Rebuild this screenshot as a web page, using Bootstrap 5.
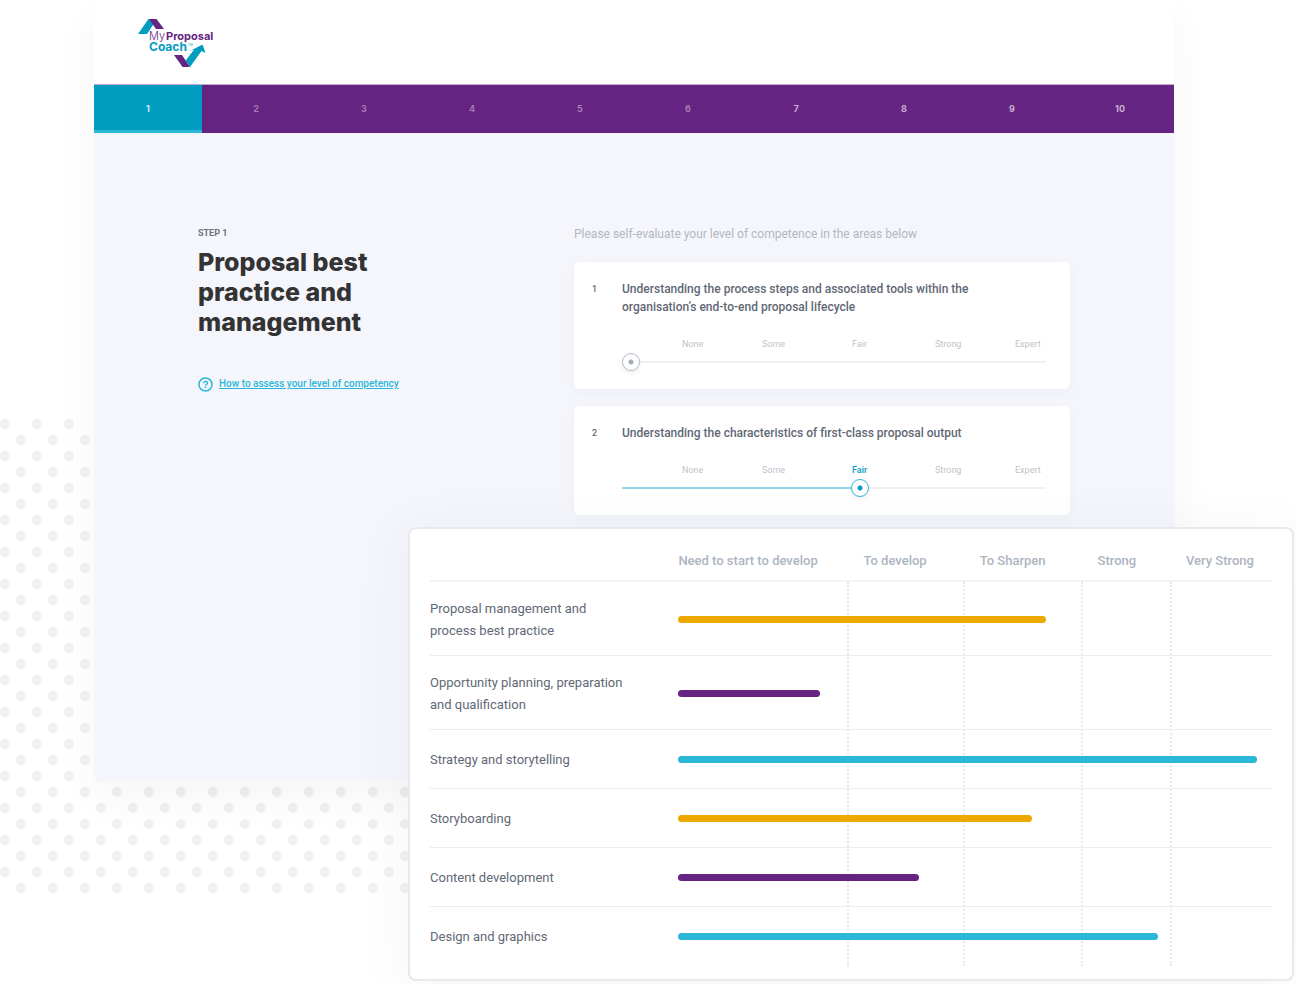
<!DOCTYPE html>
<html lang="en">
<head>
<meta charset="utf-8">
<meta name="viewport" content="width=device-width, initial-scale=1">
<title>MyProposalCoach</title>
<link href="https://cdn.jsdelivr.net/npm/bootstrap@5.3.0/dist/css/bootstrap.min.css" rel="stylesheet">
<style>
  :root { --teal: #009dc0; --sky: #2ab7d8; --violet: #662482; --amber: #eca900; --slate: #5f6875; --mist: #adb5c1; }
  body { font-family: Roboto, sans-serif; color: var(--slate); background: #fff; }
  .scene { position: relative; padding-bottom: 3px; overflow: hidden; }
  .dots {
    position: absolute; left: 0; right: 40%; top: 418px; bottom: 90px;
    background:
      radial-gradient(circle at 5px 6px, #eff0f2 4px, transparent 6px),
      radial-gradient(circle at 21px 22px, #eff0f2 4px, transparent 6px);
    background-size: 32px 32px;
  }
  .panel {
    position: relative; margin: 0 122px 0 94px; min-height: 781px; background: #f5f6fb;
    border-radius: 0 0 6px 6px; box-shadow: 0 18px 44px rgba(0, 0, 0, .04);
  }
  .brand-bar { height: 84px; padding: 18px 44px; background: #fff; }
  .steps { border-top: 1px solid #c5a9cf; background: var(--violet); }
  .steps a {
    height: 48px; font: 700 9px Inter, sans-serif; color: #a57cb4;
    border-bottom: 3px solid transparent; padding-top: 2px; text-decoration: none;
  }
  .steps a.current { background: var(--teal); border-bottom-color: var(--sky); color: #c8edf5; }
  .steps a.ahead { color: #c9b0d2; }
  .panel-main { padding: 92px 104px 0; }
  .intro { flex: 376 1 0; }
  .survey { flex: 496 1 0; }
  .step-label { font-size: 9px; line-height: 16px; font-weight: 700; color: #6d737c; }
  .title { font: 800 25px/30px Inter, sans-serif; color: #333; max-width: 220px; margin: 6px 0 39px; }
  .help { font-size: 10px; line-height: 16px; font-weight: 500; color: var(--sky); }
  .help svg { margin-right: 6px; }
  .lead-in { font-size: 12px; line-height: 18px; color: #b0b8c4; margin-bottom: 19px; }
  .question { border-radius: 6px; padding: 18px 24px 17px 18px; background: #fff; box-shadow: 0 4px 14px rgba(40, 50, 90, .03); margin-bottom: 17px; }
  .q-num { width: 30px; font-size: 9px; line-height: 18px; font-weight: 500; }
  .q-text { font-size: 12px; line-height: 18px; font-weight: 500; max-width: 360px; }
  .scale-names { display: grid; grid-template-columns: 60fr 80fr 90fr 83fr 80fr 31fr; font-size: 9px; line-height: 12px; color: #bec3ca; margin-top: 22px; }
  .scale-names .picked { color: var(--teal); font-weight: 500; }
  .scale { -webkit-appearance: none; appearance: none; display: block; width: 100%; height: 20px; margin: 2px 0 0; background: none; }
  .scale::-webkit-slider-runnable-track {
    height: 2px;
    background: linear-gradient(#8fd8e8, #8fd8e8) 0 0 / var(--fill) 2px no-repeat, #f0f1f3;
  }
  .scale::-webkit-slider-thumb {
    -webkit-appearance: none; width: 18px; height: 18px; margin-top: -8px; border-radius: 50%;
    border: 1px solid #b4bbc6; box-shadow: 0 2px 5px rgba(0, 0, 0, .08);
    background: radial-gradient(circle, #a4adba 2px, #fff 3px);
  }
  .scale.on::-webkit-slider-thumb { border-color: var(--sky); background: radial-gradient(circle, var(--teal) 2px, #fff 3px); }
  .report {
    position: relative; margin: -254px 2px 0 408px; padding: 12px 20px 13px; background: #fff;
    border: 2px solid #e6e9ee; border-radius: 8px; box-shadow: 0 8px 56px rgba(60, 90, 90, .06);
  }
  .levels { position: relative; }
  .results { position: relative; table-layout: fixed; width: 100%; font-size: 13px; line-height: 22px; }
  .results th { padding: 0; font-weight: 400; }
  .results thead th { height: 40px; padding: 0 0 0 15px; font-weight: 500; color: var(--mist); white-space: nowrap; vertical-align: middle; }
  .results thead th:nth-child(2) { padding-left: 0; }
  .results tr { height: 59px; border-bottom: 1px solid #e9ecf0; }
  .results thead tr { height: 40px; border-bottom: 2px solid #f3f4f6; }
  .results tr.tall { height: 74px; }
  .results tbody tr:last-child { border-bottom-color: transparent; }
  .results tbody th { padding-top: 3px; }
  .results td { padding: 2px 0 0; }
  .meter { height: 7px; border-radius: 4px; }
  .m-amber { background: var(--amber); } .m-violet { background: var(--violet); } .m-sky { background: var(--sky); }
  .guides { position: absolute; inset: 41px 0 0; display: grid; grid-template-columns: 417fr 116fr 118fr 89fr 102fr; pointer-events: none; }
  .guides i + i { border-left: 2px dotted rgba(190, 195, 203, .38); }
</style>
</head>
<body>
<div class="scene">
  <div class="dots"></div>
  <main class="panel">
    <header class="brand-bar">
      <a href="#" class="d-block" aria-label="MyProposalCoach">
        <svg width="80" height="50" viewBox="0 0 80 50" class="d-block">
          <path d="M0 16 10.500 1h6L15 7 9 16z" fill="#009dc0"/>
          <path d="M11 1h7.500L26 11h-8z" fill="#662482"/>
          <path d="M36 37h8l8 12h-7.500z" fill="#662482"/>
          <path d="M52 49 47.700 42.500 56 31.800 52 33 64.500 26.500 67.500 35 63.500 33z" fill="#009dc0"/>
          <g font-family="Inter, sans-serif" font-size="11">
            <text x="11" y="22" fill="#662482" font-weight="300">My</text>
            <text x="28" y="22" fill="#662482" font-weight="700">Proposal</text>
            <text x="11" y="33" fill="#009dc0" font-weight="700" font-size="12">Coach</text>
            <text x="50" y="28" fill="#009dc0" font-size="3">TM</text>
          </g>
        </svg>
      </a>
    </header>
    <nav class="steps d-flex" aria-label="Steps">
      <a href="#" class="current flex-fill w-100 d-flex align-items-center justify-content-center" aria-current="step">1</a>
      <a href="#" class="flex-fill w-100 d-flex align-items-center justify-content-center">2</a>
      <a href="#" class="flex-fill w-100 d-flex align-items-center justify-content-center">3</a>
      <a href="#" class="flex-fill w-100 d-flex align-items-center justify-content-center">4</a>
      <a href="#" class="flex-fill w-100 d-flex align-items-center justify-content-center">5</a>
      <a href="#" class="flex-fill w-100 d-flex align-items-center justify-content-center">6</a>
      <a href="#" class="ahead flex-fill w-100 d-flex align-items-center justify-content-center">7</a>
      <a href="#" class="ahead flex-fill w-100 d-flex align-items-center justify-content-center">8</a>
      <a href="#" class="ahead flex-fill w-100 d-flex align-items-center justify-content-center">9</a>
      <a href="#" class="ahead flex-fill w-100 d-flex align-items-center justify-content-center">10</a>
    </nav>
    <div class="panel-main d-flex">
      <section class="intro">
        <div class="step-label">STEP 1</div>
        <h1 class="title">Proposal best practice and management</h1>
        <a href="#" class="help d-flex align-items-center">
          <svg width="15" height="15" viewBox="0 0 15 15" fill="none" stroke="#2ab7d8" stroke-width="1.500" class="flex-shrink-0"><circle cx="7.500" cy="7.500" r="6.500"/><path d="M5.700 6.200c0-2.400 3.700-2.400 3.700-.2 0 1.400-1.900 1.300-1.900 2.700M7.500 9.800v1.400"/></svg>How to assess your level of competency</a>
      </section>
      <section class="survey">
        <p class="lead-in">Please self-evaluate your level of competence in the areas below</p>
        <div class="question d-flex">
          <span class="q-num flex-shrink-0">1</span>
          <div class="flex-grow-1">
            <label class="q-text d-block" for="q1">Understanding the process steps and associated tools within the organisation’s end-to-end proposal lifecycle</label>
            <div class="scale-names"><span></span><span>None</span><span>Some</span><span>Fair</span><span>Strong</span><span>Expert</span></div>
            <input class="scale" type="range" id="q1" min="0" max="100" value="0" style="--fill: 0%">
          </div>
        </div>
        <div class="question d-flex">
          <span class="q-num flex-shrink-0">2</span>
          <div class="flex-grow-1">
            <label class="q-text d-block" for="q2">Understanding the characteristics of first-class proposal output</label>
            <div class="scale-names"><span></span><span>None</span><span>Some</span><span class="picked">Fair</span><span>Strong</span><span>Expert</span></div>
            <input class="scale on" type="range" id="q2" min="0" max="500" value="282" style="--fill: 56%">
          </div>
        </div>
      </section>
    </div>
  </main>
  <section class="report">
    <div class="levels">
      <div class="guides"><i></i><i></i><i></i><i></i><i></i></div>
      <table class="results">
        <colgroup><col style="width:29.5%"><col style="width:20.2%"><col style="width:13.8%"><col style="width:14%"><col style="width:10.5%"><col style="width:12%"></colgroup>
        <thead><tr><th></th><th scope="col">Need to start to develop</th><th scope="col">To develop</th><th scope="col">To Sharpen</th><th scope="col">Strong</th><th scope="col">Very Strong</th></tr></thead>
        <tbody>
          <tr class="tall"><th scope="row">Proposal management and<br>process best practice</th><td colspan="5"><div class="meter m-amber" style="width:62%"></div></td></tr>
          <tr class="tall"><th scope="row">Opportunity planning, preparation<br>and qualification</th><td colspan="5"><div class="meter m-violet" style="width:23.8%"></div></td></tr>
          <tr><th scope="row">Strategy and storytelling</th><td colspan="5"><div class="meter m-sky" style="width:97.4%"></div></td></tr>
          <tr><th scope="row">Storyboarding</th><td colspan="5"><div class="meter m-amber" style="width:59.5%"></div></td></tr>
          <tr><th scope="row">Content development</th><td colspan="5"><div class="meter m-violet" style="width:40.6%"></div></td></tr>
          <tr><th scope="row">Design and graphics</th><td colspan="5"><div class="meter m-sky" style="width:80.8%"></div></td></tr>
        </tbody>
      </table>
    </div>
  </section>
</div>
<script src="https://cdn.jsdelivr.net/npm/bootstrap@5.3.0/dist/js/bootstrap.bundle.min.js"></script>
</body>
</html>
